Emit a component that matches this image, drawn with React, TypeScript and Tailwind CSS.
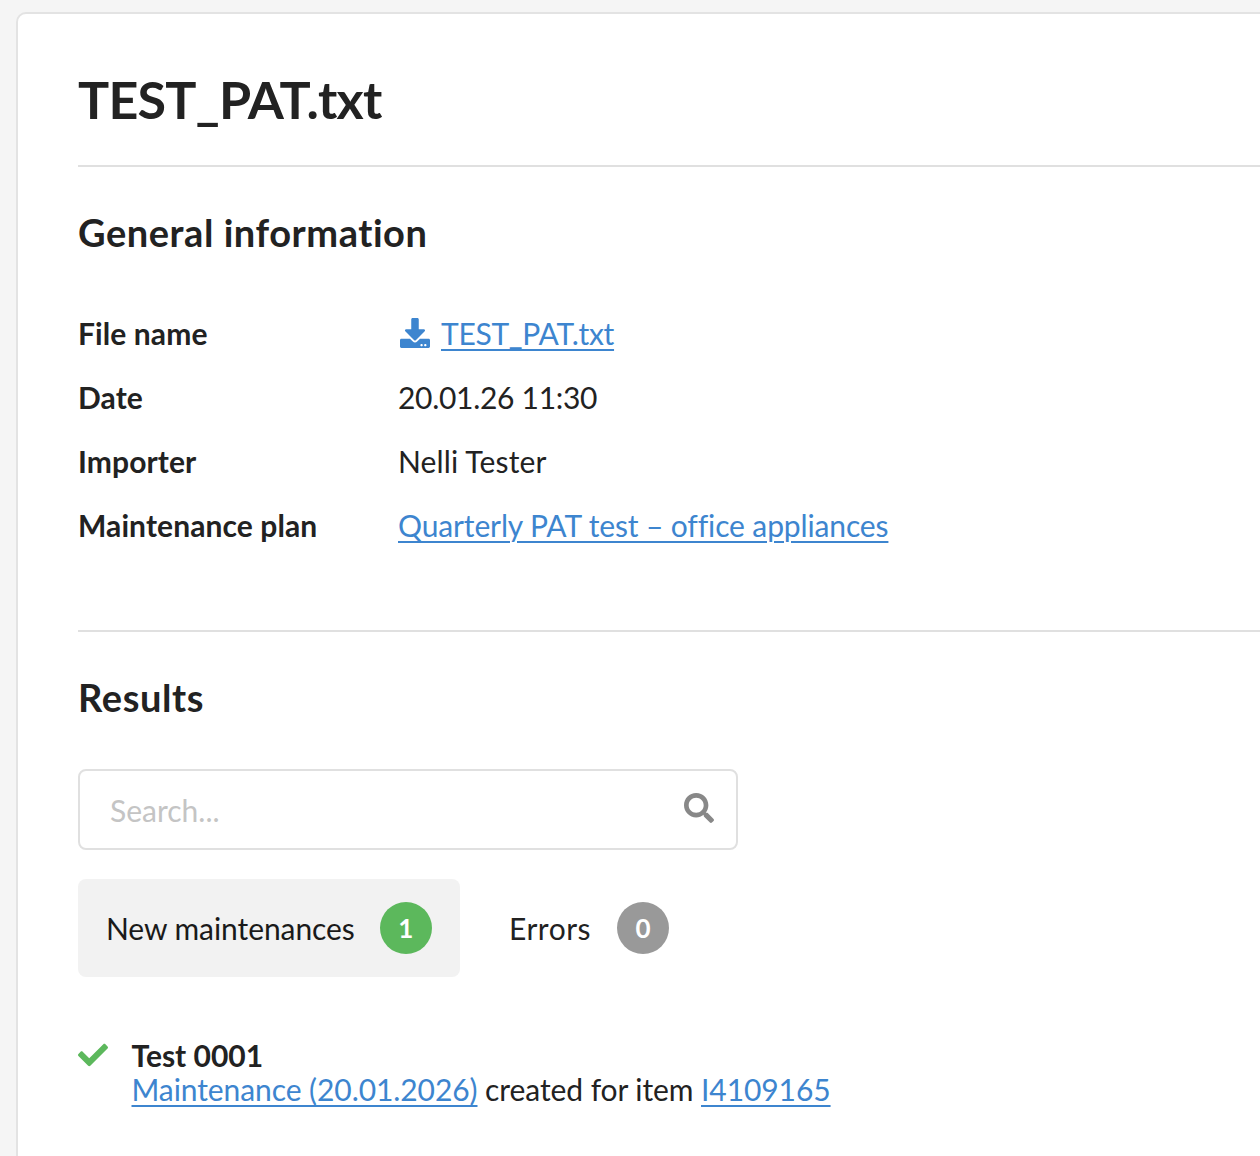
import { FaCheck, FaDownload, FaSearch } from "react-icons/fa"

const linkClass = "text-[#3d85cf] underline decoration-2 underline-offset-[4px]"

function InfoRow({ label, children }: { label: string; children: React.ReactNode }) {
  return (
    <div className="flex h-[64px] items-center">
      <div className="w-[320px] font-bold tracking-[0.1px]">{label}</div>
      <div className="flex items-center">{children}</div>
    </div>
  )
}

export default function App() {
  return (
    <div className="h-[1156px] w-[1260px] overflow-hidden bg-[#f5f5f5] pl-4 pt-3 font-['Lato',sans-serif] text-[30px] leading-[34px] text-[#222222] [font-variant-ligatures:none]">
      <div className="h-[1300px] w-[1400px] rounded-tl-[10px] border-2 border-[#e3e3e3] bg-white pl-[60px] pt-[33px]">
        <h1 className="text-[52px] font-bold leading-[104px] tracking-[-0.8px]">TEST_PAT.txt</h1>
        <hr className="mt-[14px] border-t-2 border-[#e0e0e0]" />

        <h2 className="mt-[41px] text-[38px] font-bold leading-[48px] tracking-[0.55px]">General information</h2>
        <div className="mt-[45px]">
          <InfoRow label="File name">
            <FaDownload className="ml-[2px] mr-[11px] h-[30px] w-[30px] text-[#3d85cf]" />
            <a className={`${linkClass} tracking-[-0.3px]`}>TEST_PAT.txt</a>
          </InfoRow>
          <InfoRow label="Date"><span className="tracking-[-0.3px]">20.01.26 11:30</span></InfoRow>
          <InfoRow label="Importer"><span className="tracking-[0.15px]">Nelli Tester</span></InfoRow>
          <InfoRow label="Maintenance plan">
            <a className={`${linkClass} tracking-[-0.13px]`}>Quarterly PAT test – office appliances</a>
          </InfoRow>
        </div>
        <hr className="mt-[73px] border-t-2 border-[#e0e0e0]" />

        <h2 className="mt-[41px] text-[38px] font-bold leading-[48px] tracking-[0.6px]">Results</h2>
        <div className="mt-[48px] flex h-[81px] w-[660px] items-center justify-between rounded-[8px] border-2 border-[#e0e0e0] pl-[30px] pr-[22px]">
          <span className="text-[#c4c4c4]">Search...</span>
          <FaSearch className="mb-[3px] h-[30px] w-[30px] text-[#888888]" />
        </div>

        <div className="mt-[29px] flex items-center">
          <div className="flex h-[98px] w-[382px] items-center rounded-[8px] bg-[#f2f2f2] pl-[28px]">
            <span className="tracking-[-0.07px] text-[#1a1a1a]">New maintenances</span>
            <span className="ml-[25px] flex h-[52px] w-[52px] items-center justify-center rounded-full bg-[#5cb85c] text-[26px] font-bold text-white">1</span>
          </div>
          <div className="ml-[49px] flex items-center">
            <span className="tracking-[0.5px]">Errors</span>
            <span className="ml-[26px] flex h-[52px] w-[52px] items-center justify-center rounded-full bg-[#999999] text-[26px] font-bold text-white">0</span>
          </div>
        </div>

        <div className="mt-[61px] flex">
          <FaCheck className="mt-[2px] h-[30px] w-[30px] text-[#5cb85c]" />
          <div className="ml-[23.5px]">
            <div className="font-bold">Test 0001</div>
            <div className="tracking-[-0.08px]">
              <a className={linkClass}>Maintenance (20.01.2026)</a> created for item <a className={linkClass}>I4109165</a>
            </div>
          </div>
        </div>
      </div>
    </div>
  )
}
